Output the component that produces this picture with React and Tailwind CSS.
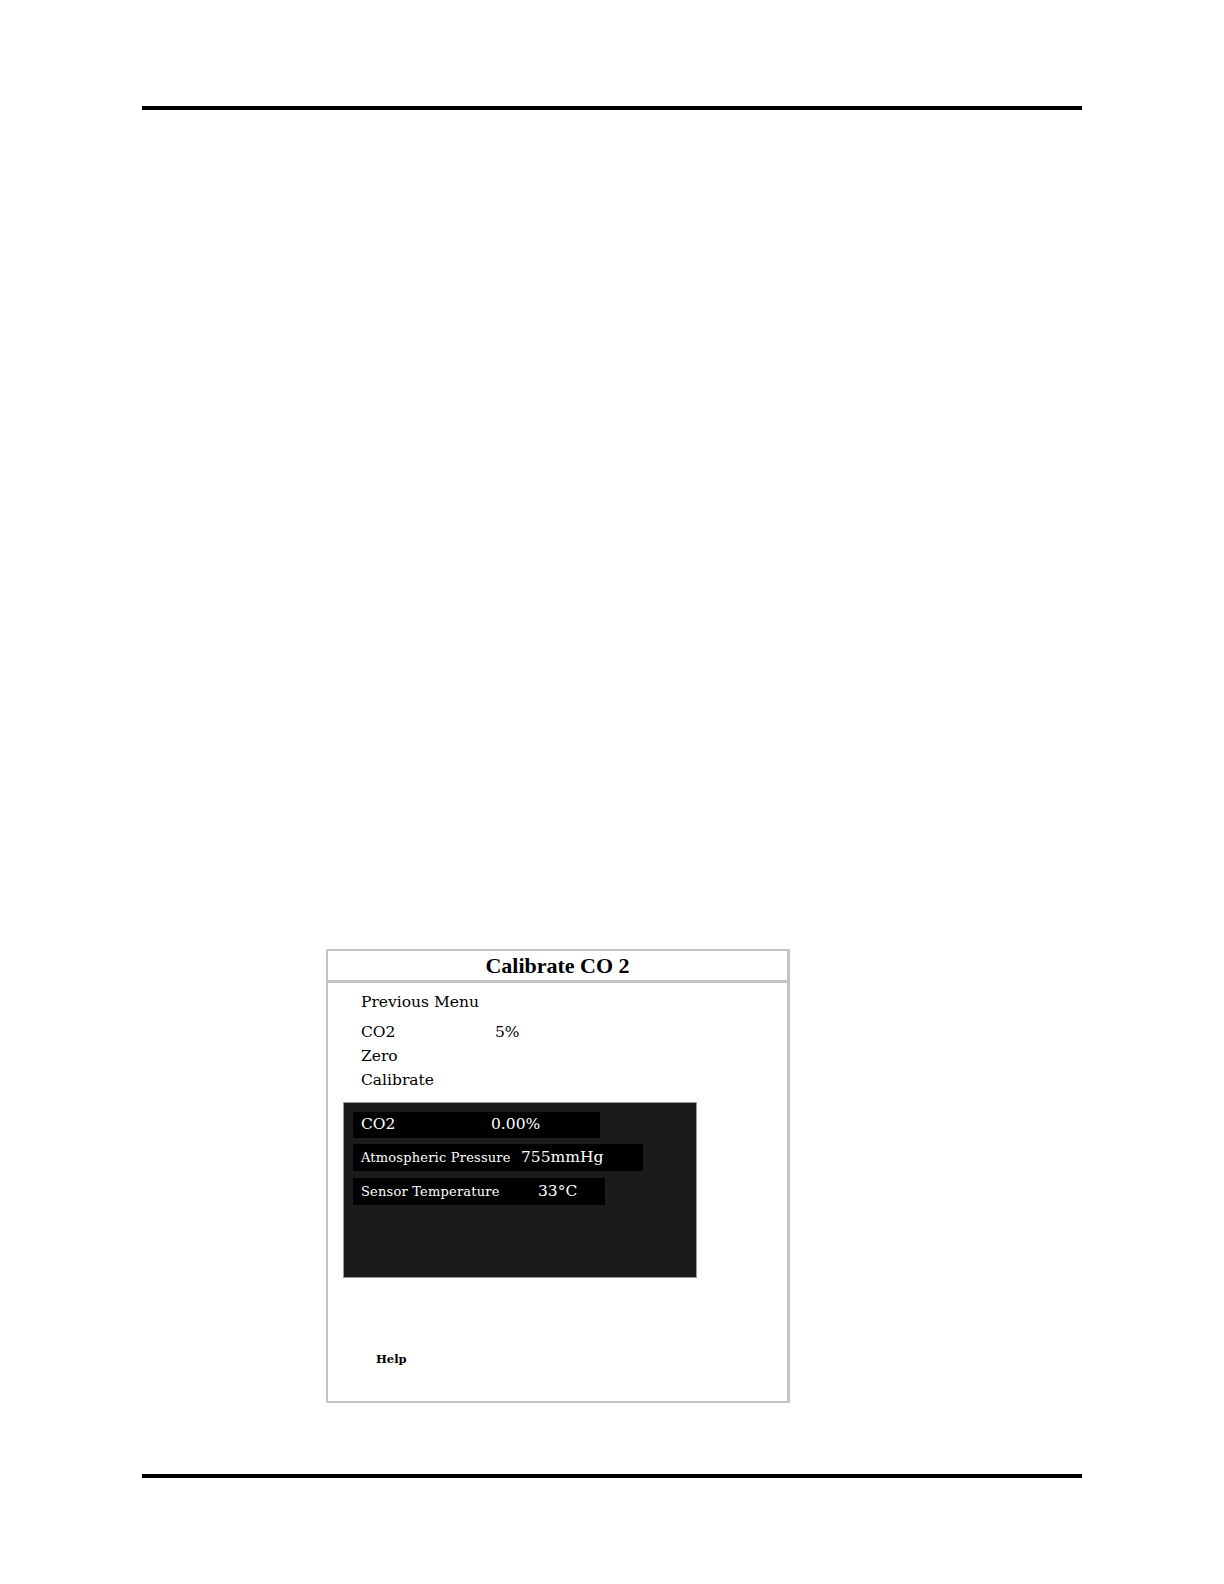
import React from "react";

const serif = { fontFamily: '"DejaVu Serif", "Liberation Serif", serif' };

const MenuItem = ({ label, value, className = "" }) => (
  <div className={`flex h-[24px] items-center text-[15.5px] text-black ${className}`}>
    <span className="w-[134px]">{label}</span>
    {value && <span>{value}</span>}
  </div>
);

const Reading = ({ width, labelWidth, labelClass, label, value }) => (
  <div
    className={`flex items-center bg-black pl-[8px] text-white ${width}`}
  >
    <span className={`${labelWidth} ${labelClass}`}>{label}</span>
    <span className="text-[15.5px]">{value}</span>
  </div>
);

export default function App() {
  return (
    <div className="min-h-[1584px] w-[1224px] bg-white pt-[106px]" style={serif}>
      <div className="ml-[142px] h-[4px] w-[940px] bg-black" />

      <div className="ml-[326px] mt-[839px] flex h-[454px] w-[464px] flex-col border-2 border-r-[3px] border-[#c4c4c4]">
        <div
          className="flex h-[32px] items-center justify-center border-b-[3px] border-[#c4c4c4] text-[22px] font-bold text-black"
          style={{ fontFamily: '"Liberation Serif", serif' }}
        >
          Calibrate CO 2
        </div>

        <div className="pl-[33px] pt-[8px]">
          <MenuItem label="Previous Menu" className="mb-[6px]" />
          <MenuItem label="CO2" value="5%" />
          <MenuItem label="Zero" />
          <MenuItem label="Calibrate" />
        </div>

        <div className="ml-[15px] mt-[9px] flex h-[176px] w-[354px] flex-col gap-[6px] border border-[#9a9a9a] bg-[#1c1a1c] pl-[9px] pt-[9px]">
          <Reading
            width="h-[26px] w-[247px]"
            labelWidth="w-[130px]"
            labelClass="text-[15.5px]"
            label="CO2"
            value="0.00%"
          />
          <Reading
            width="h-[27px] w-[290px]"
            labelWidth="w-[160px]"
            labelClass="text-[13px] tracking-[0.2px]"
            label="Atmospheric Pressure"
            value="755mmHg"
          />
          <Reading
            width="h-[27px] w-[252px] mt-[1px]"
            labelWidth="w-[177px]"
            labelClass="text-[13px] tracking-[0.2px]"
            label="Sensor Temperature"
            value="33°C"
          />
        </div>

        <div className="ml-[48px] mt-[73px] text-[11.5px] font-bold text-black">
          Help
        </div>
      </div>

      <div className="ml-[142px] mt-[71px] h-[4px] w-[940px] bg-black" />
    </div>
  );
}
